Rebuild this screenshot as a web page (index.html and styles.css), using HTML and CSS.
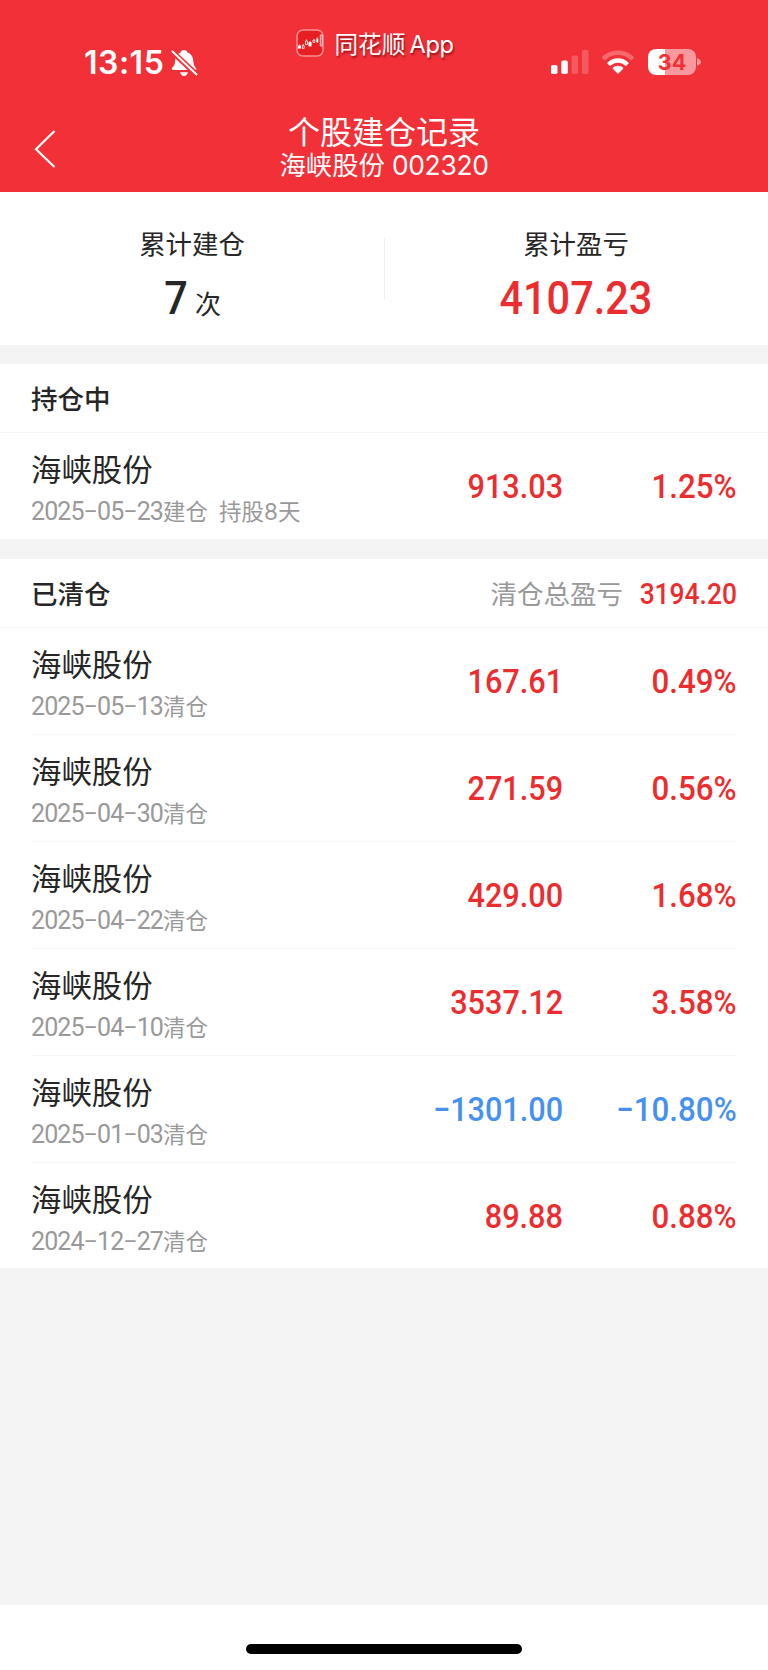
FILE: index.html
```html
<!DOCTYPE html>
<html lang="zh-CN">
<head>
    <meta charset="UTF-8">
    <meta name="viewport" content="width=device-width, initial-scale=1.0">
    <title>个股建仓记录</title>
    <link rel="stylesheet" href="styles.css">
</head>
<body>
    <header class="header">
        <div class="status-bar">
            <div class="status-left">
                <span class="time">13:15</span>
                <svg class="bell" width="27" height="28" viewBox="0 0 27 28">
                    <path fill="#fff" d="M13 1c1.900 0 3.200 1.200 3.400 2.600 4 1.400 5.700 4.600 5.900 8.400.2 4 1.100 5.300 2.700 6.900.9.900.5 2.200-.8 2.200H2.200c-1.300 0-1.900-1.300-1-2.300 1.700-1.700 2.700-3.200 2.900-6.900.2-3.900 1.900-6.900 5.500-8.300C9.800 2.200 11.100 1 13 1zM9.100 23.200h7.800c-.4 2.400-1.900 3.800-3.900 3.800s-3.500-1.400-3.900-3.800z"/>
                    <path stroke="#f23038" stroke-width="5.500" d="M1 2.500l25.500 24"/>
                    <path stroke="#fff" stroke-width="2" stroke-linecap="round" d="M1.500 2.500l24 23"/>
                </svg>
            </div>
            <div class="app-label">
                <svg class="app-icon" width="28" height="28" viewBox="0 0 28 28">
                    <rect x="1" y="1" width="26" height="26" rx="6" fill="#e81f22" stroke="#f79092" stroke-width="1.500"/>
                    <path fill="#fff" d="M2 16.500h3v3H2zM12.500 13h3v4.500h-3zM20.300 9.500h2v4h-2z"/>
                    <path fill="none" stroke="#fff" stroke-width=".8" d="M6.300 16.500h1.800v3H6.300zM9.500 12h2v3.500h-2zM10.500 10.500V12M17 11h1.800v2.500H17zM24.300 6h1.800v11h-1.800zM3.500 15.500v1M7.200 15v1.500M14 12v1M18 10v1M21.300 8.500v1"/>
                </svg>
                <span>同花顺<span class="latin">App</span></span>
            </div>
            <div class="status-right">
                <svg width="38" height="25" viewBox="0 0 38 25">
                    <rect x="0" y="15" width="6.500" height="9" rx="1.800" fill="#fff"/>
                    <rect x="10.300" y="10.500" width="6.500" height="13.500" rx="1.800" fill="#fff"/>
                    <rect x="20.600" y="5.500" width="6.500" height="18.500" rx="1.800" fill="#fff" fill-opacity=".2"/>
                    <rect x="31" y="0" width="6.500" height="24" rx="1.800" fill="#fff" fill-opacity=".2"/>
                </svg>
                <svg class="wifi" width="32" height="24" viewBox="0 0 32 24">
                    <path fill="#fff" fill-opacity=".28" d="M16 .5C9.800.500 4.300 2.900.3 6.700c-.4.400-.4.900 0 1.300l1.900 1.900c.4.400.9.400 1.300 0C6.700 6.900 11.100 5 16 5s9.300 1.900 12.500 4.900c.4.400.9.400 1.300 0L31.700 8c.4-.4.400-.9 0-1.300C27.700 2.900 22.200.500 16 .500z"/>
                    <path fill="#fff" d="M16 8.300c-4.100 0-7.700 1.600-10.400 4.100-.4.400-.4.900 0 1.300l1.900 1.900c.4.400.9.400 1.300 0 1.900-1.700 4.400-2.800 7.200-2.800s5.300 1.100 7.200 2.800c.4.400.9.400 1.300 0l1.900-1.900c.4-.4.400-.9 0-1.300C23.700 9.900 20.100 8.300 16 8.300zM16 15.800c-1.900 0-3.700.7-5 1.900-.4.400-.4.900 0 1.200l4.300 4.300c.4.400 1 .4 1.400 0l4.300-4.300c.4-.4.400-.9 0-1.200-1.300-1.200-3.100-1.900-5-1.900z"/>
                </svg>
                <div class="battery">34</div>
                <svg class="battery-tip" width="5" height="8" viewBox="0 0 5 8">
                    <path fill="#f9999d" d="M0 0c3 1.200 4 2.500 4 4s-1 2.800-4 4z"/>
                </svg>
            </div>
        </div>
        <div class="nav-bar">
            <svg class="back" width="22" height="40" viewBox="0 0 22 40">
                <path fill="none" stroke="#fff" stroke-width="2.200" d="M20.500 2L2 20.200 20.500 38"/>
            </svg>
            <div class="nav-title">
                <h1>个股建仓记录</h1>
                <p>海峡股份 <span class="latin">002320</span></p>
            </div>
        </div>
    </header>

    <section class="summary">
        <div class="summary-item">
            <div class="summary-label">累计建仓</div>
            <div class="summary-value"><span class="num">7</span><span class="unit">次</span></div>
        </div>
        <div class="summary-item">
            <div class="summary-label">累计盈亏</div>
            <div class="summary-value up"><span class="num">4107.23</span></div>
        </div>
    </section>

    <section class="card holding">
        <div class="card-head">
            <h2>持仓中</h2>
        </div>
        <div class="row">
            <div class="stock">
                <div class="name">海峡股份</div>
                <div class="date"><span class="day">2025−05−23</span>建仓<span class="held">持股<span class="latin">8</span>天</span></div>
            </div>
            <div class="profit up"><span class="num">913.03</span></div>
            <div class="rate up"><span class="num">1.25%</span></div>
        </div>
    </section>

    <section class="card cleared">
        <div class="card-head">
            <h2>已清仓</h2>
            <div class="total"><span class="total-label">清仓总盈亏</span><span class="num up">3194.20</span></div>
        </div>
        <div class="row">
            <div class="stock">
                <div class="name">海峡股份</div>
                <div class="date"><span class="day">2025−05−13</span>清仓</div>
            </div>
            <div class="profit up"><span class="num">167.61</span></div>
            <div class="rate up"><span class="num">0.49%</span></div>
        </div>
        <div class="row">
            <div class="stock">
                <div class="name">海峡股份</div>
                <div class="date"><span class="day">2025−04−30</span>清仓</div>
            </div>
            <div class="profit up"><span class="num">271.59</span></div>
            <div class="rate up"><span class="num">0.56%</span></div>
        </div>
        <div class="row">
            <div class="stock">
                <div class="name">海峡股份</div>
                <div class="date"><span class="day">2025−04−22</span>清仓</div>
            </div>
            <div class="profit up"><span class="num">429.00</span></div>
            <div class="rate up"><span class="num">1.68%</span></div>
        </div>
        <div class="row">
            <div class="stock">
                <div class="name">海峡股份</div>
                <div class="date"><span class="day">2025−04−10</span>清仓</div>
            </div>
            <div class="profit up"><span class="num">3537.12</span></div>
            <div class="rate up"><span class="num">3.58%</span></div>
        </div>
        <div class="row">
            <div class="stock">
                <div class="name">海峡股份</div>
                <div class="date"><span class="day">2025−01−03</span>清仓</div>
            </div>
            <div class="profit down"><span class="num">−1301.00</span></div>
            <div class="rate down"><span class="num">−10.80%</span></div>
        </div>
        <div class="row">
            <div class="stock">
                <div class="name">海峡股份</div>
                <div class="date"><span class="day">2024−12−27</span>清仓</div>
            </div>
            <div class="profit up"><span class="num">89.88</span></div>
            <div class="rate up"><span class="num">0.88%</span></div>
        </div>
    </section>

    <footer class="home-area">
        <div class="home-bar"></div>
    </footer>
</body>
</html>
```

FILE: styles.css
```css
* {
    box-sizing: border-box;
}
body {
    display: flex;
    flex-direction: column;
    min-height: 1670px;
    margin: 0;
    background-color: #f4f4f4;
    color: #262626;
    font-family: 'Noto Sans CJK SC', sans-serif;
}
h1, h2, p {
    margin: 0;
    font-weight: 400;
}
.latin {
    font-family: Inter, sans-serif;
}
.up {
    color: #ec2d2f;
}
.down {
    color: #4691ee;
}

/* header */
.header {
    height: 192px;
    background-color: #f23038;
    color: #fff;
}
.status-bar {
    display: grid;
    grid-template-columns: 1fr auto 1fr;
    height: 106px;
}
.status-left {
    display: flex;
    align-items: flex-start;
    padding: 44px 0 0 84px;
}
.time {
    font-family: Inter, sans-serif;
    font-size: 32px;
    font-weight: 600;
    line-height: 38px;
    letter-spacing: 0.5px;
}
.bell {
    margin: 5px 0 0 7px;
}
.app-label {
    display: flex;
    gap: 10px;
    padding: 29px 18px 0 0;
    font-size: 23.700px;
    line-height: 28px;
    text-shadow: 1px 2px 2px rgba(90, 0, 0, 0.6);
}
.app-label .latin {
    margin-left: 4px;
    letter-spacing: -0.4px;
}
.status-right {
    display: flex;
    justify-content: flex-end;
    align-items: flex-start;
    padding: 50px 66px 0 0;
}
.wifi {
    margin: 0 14px 0 13px;
}
.battery {
    width: 48px;
    height: 26px;
    margin-top: -1px;
    border-radius: 8px;
    background: linear-gradient(to right, #fff 17px, #f9999d 17px);
    color: #f23038;
    font-family: Inter, sans-serif;
    font-size: 21.500px;
    font-weight: 700;
    line-height: 27px;
    text-align: center;
}
.battery-tip {
    margin: 8px 0 0 1px;
}
.nav-bar {
    display: grid;
    grid-template-columns: 100px 1fr 100px;
}
.back {
    margin: 23px 0 0 34px;
}
.nav-title {
    text-align: center;
}
.nav-title h1 {
    padding-top: 5px;
    font-size: 32px;
    line-height: 38px;
}
.nav-title p {
    font-size: 26.400px;
    line-height: 30px;
}
.nav-title .latin {
    margin-left: 1px;
    letter-spacing: -0.3px;
}

/* totals */
.summary {
    display: flex;
    height: 153px;
    background-color: #fff;
    text-align: center;
}
.summary-item {
    flex: 1;
    padding-top: 34px;
}
.summary-item + .summary-item {
    background: linear-gradient(#eee, #eee) 0 46px / 1px 61px no-repeat;
}
.summary-label {
    font-size: 26.400px;
    line-height: 34px;
}
.summary-value {
    display: flex;
    justify-content: center;
    align-items: baseline;
    margin-top: 12px;
    line-height: 54px;
}
.unit {
    margin-left: 6px;
    font-size: 26px;
}
.num {
    display: inline-block;
    font-family: Roboto, sans-serif;
    font-weight: 500;
    transform: scaleX(0.91);
    transform-origin: right center;
}
.summary .num {
    font-size: 45.500px;
    transform-origin: center;
}

/* lists */
.card {
    background-color: #fff;
}
.holding {
    height: 175px;
    margin-top: 19px;
}
.cleared {
    height: 709px;
    margin-top: 20px;
}
.card-head {
    display: flex;
    justify-content: space-between;
    height: 69px;
    padding: 0 31px;
    border-bottom: 1px solid #f5f5f5;
    line-height: 68px;
}
.card-head h2 {
    font-size: 26.500px;
    font-weight: 500;
}
.total {
    display: flex;
    align-items: baseline;
}
.total-label {
    color: #999;
    font-size: 26.500px;
}
.total .num {
    margin-left: 7px;
    font-size: 29px;
}
.row {
    display: grid;
    grid-template-columns: 1fr 172px 174px;
    height: 107px;
    margin: 0 31px;
    border-bottom: 1px solid #f7f7f7;
}
.holding .row,
.row:last-child {
    border-bottom: none;
}
.name {
    padding-top: 15px;
    font-size: 30.400px;
    line-height: 40px;
}
.date {
    padding-top: 2px;
    color: #999;
    font-size: 22.500px;
    line-height: 40px;
}
.day {
    display: inline-block;
    font-family: Roboto, sans-serif;
    font-size: 25px;
    letter-spacing: -0.9px;
}
.held {
    margin-left: 11px;
}
.profit, .rate {
    font-size: 33.700px;
    line-height: 101px;
    text-align: right;
}
.rate .num {
    transform: scaleX(0.93);
}

.home-area {
    display: flex;
    justify-content: center;
    height: 65px;
    margin-top: auto;
    padding-top: 39px;
    background-color: #fff;
}
.home-bar {
    width: 276px;
    height: 10px;
    border-radius: 5px;
    background-color: #000;
}
```
